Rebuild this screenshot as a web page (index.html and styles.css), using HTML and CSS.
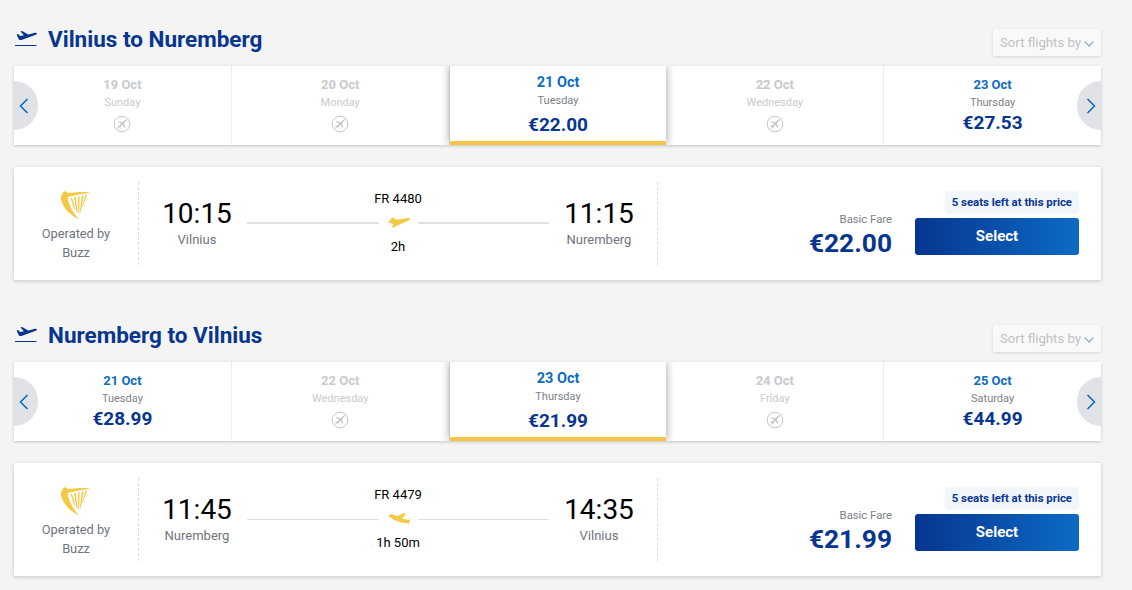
FILE: index.html
```html
<!DOCTYPE html>
<html lang="en">
<head>
<meta charset="utf-8">
<title>Flights</title>
<link rel="stylesheet" href="styles.css">
</head>
<body>
<svg class="defs" width="0" height="0" aria-hidden="true">
  <defs>
    <symbol id="harp" viewBox="0 0 30 30">
      <path fill="#f5c945" d="M0 7C.3 4.500 2 2 4 1c1.500 1.200 3 2 5 2C15 2.600 24 1 30 3.300 25 3 20.500 4 15.700 5 12.500 5.800 9.500 6.500 7 6.700c-.3 2.300 0 4.300.8 6.300C10 19 14 25 18.300 30 11 25.500 6.500 22 4 18 1.500 14.500 0 11 0 7Z"/>
      <path fill="#f5c945" d="M9.500 8 11 7.700 14.500 19.500 13 18.500ZM13 7.300 14.700 7 16.800 22.500 15.400 21.200ZM17 6.500 18.600 6.200 18.300 24 17.300 23ZM20.800 5.700 22.600 5.300 19.700 22 18.900 21.500ZM24.500 5.100 26 5 21.200 17.500 20.600 17Z"/>
    </symbol>
    <symbol id="noflight" viewBox="0 0 18 18">
      <circle cx="9" cy="9" r="7.800" fill="none" stroke="#c4c7cb" stroke-width="1"/>
      <path fill="#c4c7cb" d="M12.700 4.400c.7-.6 1.200-.3.900.5L11 8.200l1 4.400-.8.700-1.600-3.600-2.200 2.300.2 1.500-.6.500-.8-2-2-.8.500-.6 1.500.2 2.300-2.200L4.700 7l.7-.8 4.100 1Z"/>
      <path stroke="#c4c7cb" stroke-width=".9" d="M4 13.500 14 4.500"/>
    </symbol>
    <symbol id="chev-left" viewBox="0 0 10 16">
      <path d="M8.500 1 1.500 8l7 7" fill="none" stroke="#0c6bc4" stroke-width="1.600"/>
    </symbol>
    <symbol id="chev-right" viewBox="0 0 10 16">
      <path d="M1.500 1l7 7-7 7" fill="none" stroke="#0c6bc4" stroke-width="1.600"/>
    </symbol>
    <symbol id="chev-down" viewBox="0 0 10 6">
      <path d="M.6.6 5 5 9.400.6" fill="none" stroke="#6ea8da" stroke-width="1.200"/>
    </symbol>
    <symbol id="takeoff" viewBox="0 0 22 16">
      <path fill="#073590" d="M1.600 3.600 3 3l2.200 2.100 3.700-.9L5.500.6 7.200 0l6 3.500 5.800-1.600c1.500-.4 2.800 0 3 .5.100.6-.7 1.200-2 1.700L6.500 8.900c-1 .3-2 .2-2.600-.4Z"/>
      <path fill="#073590" d="M0 14h21.500v1H0Z"/>
    </symbol>
    <symbol id="plane-up" viewBox="0 0 22 11.500">
      <path fill="#f5c945" d="M4 .3 9 2.700 19.500 .9C21 .7 22 1.500 22 2.700L12.700 7 3.300 11.300 5.300 7 0 5.300 2 3.300Z"/>
    </symbol>
    <symbol id="plane-down" viewBox="0 0 22 11.500">
      <path fill="#f5c945" d="M0 2.700 3.300 1 9 3.300 15.700 0 18 .7 14 6 22 6.700 21 10.700 12.300 9.300 5.700 6.700Z"/>
    </symbol>
  </defs>
</svg>

<main class="page">
  <section class="leg">
    <header class="leg-head">
      <h2 class="leg-title"><svg class="leg-icon"><use href="#takeoff"/></svg>Vilnius to Nuremberg</h2>
      <div class="sort">Sort flights by<svg class="sort-chev"><use href="#chev-down"/></svg></div>
    </header>
    <div class="dates">
      <div class="date off"><div class="d">19 Oct</div><div class="w">Sunday</div><svg class="none"><use href="#noflight"/></svg></div>
      <div class="date off"><div class="d">20 Oct</div><div class="w">Monday</div><svg class="none"><use href="#noflight"/></svg></div>
      <div class="date sel"><div class="d">21 Oct</div><div class="w">Tuesday</div><div class="p">€22.00</div></div>
      <div class="date off"><div class="d">22 Oct</div><div class="w">Wednesday</div><svg class="none"><use href="#noflight"/></svg></div>
      <div class="date"><div class="d">23 Oct</div><div class="w">Thursday</div><div class="p">€27.53</div></div>
      <button class="nav nav-l" aria-label="Previous"><svg class="chev"><use href="#chev-left"/></svg></button>
      <button class="nav nav-r" aria-label="Next"><svg class="chev"><use href="#chev-right"/></svg></button>
    </div>
    <article class="card">
      <div class="op"><svg class="harp"><use href="#harp"/></svg><div class="op-t">Operated by</div><div class="op-t">Buzz</div></div>
      <div class="route">
        <div class="pt"><div class="time">10:15</div><div class="city">Vilnius</div></div>
        <div class="mid">
          <div class="fn">FR 4480</div>
          <div class="track"><span class="line thick"></span><svg class="plane"><use href="#plane-up"/></svg><span class="line thick"></span></div>
          <div class="dur">2h</div>
        </div>
        <div class="pt"><div class="time">11:15</div><div class="city">Nuremberg</div></div>
      </div>
      <div class="fare">
        <div class="price"><div class="fare-l">Basic Fare</div><div class="fare-p">€22.00</div></div>
        <div class="act"><div class="seats">5 seats left at this price</div><button class="select">Select</button></div>
      </div>
    </article>
  </section>

  <section class="leg">
    <header class="leg-head">
      <h2 class="leg-title"><svg class="leg-icon"><use href="#takeoff"/></svg>Nuremberg to Vilnius</h2>
      <div class="sort">Sort flights by<svg class="sort-chev"><use href="#chev-down"/></svg></div>
    </header>
    <div class="dates">
      <div class="date"><div class="d">21 Oct</div><div class="w">Tuesday</div><div class="p">€28.99</div></div>
      <div class="date off"><div class="d">22 Oct</div><div class="w">Wednesday</div><svg class="none"><use href="#noflight"/></svg></div>
      <div class="date sel"><div class="d">23 Oct</div><div class="w">Thursday</div><div class="p">€21.99</div></div>
      <div class="date off"><div class="d">24 Oct</div><div class="w">Friday</div><svg class="none"><use href="#noflight"/></svg></div>
      <div class="date"><div class="d">25 Oct</div><div class="w">Saturday</div><div class="p">€44.99</div></div>
      <button class="nav nav-l" aria-label="Previous"><svg class="chev"><use href="#chev-left"/></svg></button>
      <button class="nav nav-r" aria-label="Next"><svg class="chev"><use href="#chev-right"/></svg></button>
    </div>
    <article class="card">
      <div class="op"><svg class="harp"><use href="#harp"/></svg><div class="op-t">Operated by</div><div class="op-t">Buzz</div></div>
      <div class="route">
        <div class="pt"><div class="time">11:45</div><div class="city">Nuremberg</div></div>
        <div class="mid">
          <div class="fn">FR 4479</div>
          <div class="track"><span class="line"></span><svg class="plane"><use href="#plane-down"/></svg><span class="line"></span></div>
          <div class="dur">1h 50m</div>
        </div>
        <div class="pt"><div class="time">14:35</div><div class="city">Vilnius</div></div>
      </div>
      <div class="fare">
        <div class="price"><div class="fare-l">Basic Fare</div><div class="fare-p">€21.99</div></div>
        <div class="act"><div class="seats">5 seats left at this price</div><button class="select">Select</button></div>
      </div>
    </article>
  </section>
</main>
</body>
</html>
```
FILE: styles.css
```css
* { box-sizing: border-box; }
html, body { margin: 0; height: 100%; overflow: hidden; }
body { background: #f4f4f4; font-family: Roboto, "Liberation Sans", sans-serif; color: #000; }
.defs { position: absolute; }
.page { width: 1101px; padding: 21px 0 0 14px; }
.leg { margin-bottom: 37px; }
.leg-head { height: 45px; display: flex; justify-content: space-between; align-items: flex-start; }
.leg-title { margin: 0; display: flex; align-items: center; height: 35px; font-size: 22.500px; font-weight: 700; color: #073590; }
.leg-icon { width: 22px; height: 16px; margin: 0 11px 0 1px; }
.sort { margin-top: 8px; width: 108px; height: 27px; background: #f9f9f9; border-radius: 2px; box-shadow: 0 1px 3px rgba(0,0,0,.12); display: flex; align-items: center; padding-left: 7px; font-size: 13.200px; color: #bfc2c7; white-space: nowrap; }
.sort-chev { width: 10px; height: 6px; margin: 2px 0 0 3px; }
.dates { position: relative; display: flex; height: 79px; background: #fff; box-shadow: 0 1px 3px rgba(0,0,0,.2); overflow: hidden; }
.date { flex: 1 1 0; display: flex; flex-direction: column; align-items: center; padding-top: 11px; border-right: 1px solid #ececec; position: relative; }
.date:nth-child(5) { border-right: 0; }
.d { font-size: 13px; line-height: 15px; font-weight: 700; color: #0c6bc4; }
.w { font-size: 11px; line-height: 14px; margin-top: 4px; color: #7b7f87; }
.p { font-size: 19px; line-height: 22px; font-weight: 700; color: #073590; margin-top: 2px; }
.off .d { color: #c8cacd; }
.off .w { color: #c8cacd; }
.none { width: 18px; height: 18px; margin-top: 5px; }
.sel { padding-top: 9px; border-right: 0; border-bottom: 4px solid #f5c445; box-shadow: 0 0 9px rgba(0,0,0,.38); z-index: 1; }
.sel .d { font-size: 14.500px; }
.sel .w { margin-top: 4px; }
.sel .p { margin-top: 6px; }
.nav { position: absolute; top: 15px; width: 24px; height: 49px; padding: 0; border: 0; background: #e0e2e5; display: flex; align-items: center; z-index: 2; }
.nav-l { left: 0; border-radius: 0 25px 25px 0; justify-content: flex-start; padding-left: 5px; }
.nav-r { right: 0; border-radius: 25px 0 0 25px; justify-content: flex-end; padding-right: 5px; }
.chev { width: 10px; height: 16px; }
.card { margin-top: 22px; height: 113px; background: #fff; box-shadow: 0 1px 4px rgba(0,0,0,.2); display: flex; align-items: center; }
.op { width: 125px; height: 83px; border-right: 1px dashed #dcdcdc; display: flex; flex-direction: column; align-items: center; }
.harp { width: 30px; height: 30px; margin: 8px 0 4px; flex: none; }
.op-t { font-size: 12.800px; line-height: 19px; color: #6f7480; }
.route { width: 519px; height: 83px; border-right: 1px dashed #dcdcdc; display: flex; align-items: flex-start; }
.pt { width: 116px; text-align: center; padding-top: 14px; flex: none; }
.time { font-size: 28px; line-height: 35px; }
.city { font-size: 13px; line-height: 14px; margin-top: 2px; color: #6f7480; }
.mid { flex: 1 1 0; margin: 0 -8px; text-align: center; }
.fn { font-size: 13px; line-height: 15px; margin-top: 9px; }
.track { display: flex; align-items: center; height: 18px; margin-top: 8px; }
.line { flex: 1 1 0; height: 1px; background: #e0e0e0; }
.line.thick { height: 2px; }
.plane { width: 22px; height: 11.500px; margin: 0 8px 0 9px; flex: none; }
.dur { font-size: 13px; line-height: 15px; margin-top: 7px; }
.fare { flex: 1 1 0; display: flex; justify-content: flex-end; padding-right: 22px; height: 83px; }
.price { text-align: right; margin-right: 23px; padding-top: 31px; }
.fare-l { font-size: 11.300px; line-height: 13px; color: #7b7f87; }
.fare-p { font-size: 26.300px; line-height: 34px; font-weight: 700; color: #073590; }
.act { width: 164px; display: flex; flex-direction: column; align-items: flex-end; padding-top: 9px; }
.seats { height: 23px; padding: 0 7px; background: #f1f6fb; border-radius: 4px; font-size: 11.400px; line-height: 23px; font-weight: 700; color: #073590; white-space: nowrap; }
.select { margin-top: 4px; width: 164px; height: 37px; padding: 0 0 2px; border: 0; border-radius: 3px; background: linear-gradient(90deg, #073590, #0c6bc4); color: #fff; font: 700 15px Roboto, "Liberation Sans", sans-serif; }
```
